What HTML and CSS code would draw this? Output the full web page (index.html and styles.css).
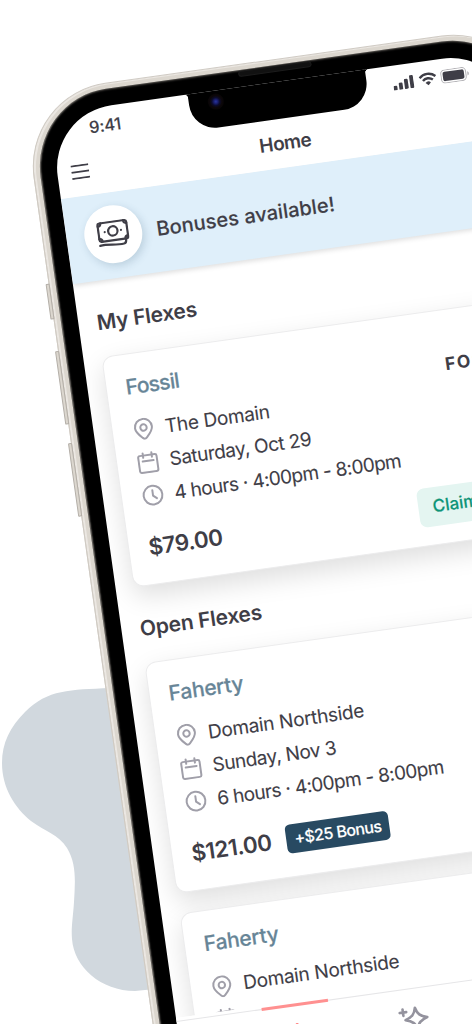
FILE: index.html
```html
<!DOCTYPE html>
<html lang="en">
<head>
    <meta charset="UTF-8">
    <meta name="viewport" content="width=device-width, initial-scale=1.0">
    <title>Home</title>
    <link rel="stylesheet" href="styles.css">
</head>
<body>

    <!-- icons used more than once -->
    <svg class="sprite" aria-hidden="true">
        <symbol id="icon-pin" viewBox="0 0 22 22">
            <path d="M11 21c-.7 0-1.300-.4-2-1.100C5.500 16.500 2.500 13.700 2.500 9.500a8.500 8.500 0 0 1 17 0c0 4.200-3 7-6.500 10.400-.7.7-1.300 1.100-2 1.100z"/>
            <circle cx="11" cy="9.700" r="3.200"/>
        </symbol>
        <symbol id="icon-calendar" viewBox="0 0 22 22">
            <rect x="1.500" y="3.500" width="18.500" height="17" rx="1.800"/>
            <path d="M6.500 1.200v4.500M15.300 1.200v4.500M5.500 9.300h11"/>
        </symbol>
        <symbol id="icon-clock" viewBox="0 0 22 22">
            <circle cx="11" cy="11" r="9.400"/>
            <path d="M11 6v5.500l3.500 3"/>
        </symbol>
    </svg>

    <svg class="blob" viewBox="0 0 160 310">
        <path d="M110 2C70 4 48 3 25 26C10 41 2 57 2 77C2 102 15 122 31 135C46 146 58 148 67 162C77 178 75 198 74 216C73 232 71 242 72 253C74 281 101 305 135 305L155 303V2z"/>
    </svg>

    <div class="phone">
        <span class="side-btn mute"></span>
        <span class="side-btn vol-up"></span>
        <span class="side-btn vol-down"></span>
        <span class="speaker"></span>

        <div class="screen">
            <div class="notch"><span class="camera"></span></div>

            <div class="status">
                <span class="time">9:41</span>
                <div class="status-icons">
                    <svg width="21" height="14" viewBox="0 0 21 14">
                        <rect x="0" y="9.500" width="3.800" height="4.500" rx="1"/>
                        <rect x="5.600" y="7" width="3.800" height="7" rx="1"/>
                        <rect x="11.200" y="4" width="3.800" height="10" rx="1"/>
                        <rect x="16.800" y="1" width="3.800" height="13" rx="1"/>
                    </svg>
                    <svg class="wifi" width="18" height="14" viewBox="0 0 18 14">
                        <path d="M1 5.200a11.500 11.500 0 0 1 16 0M4 8.400a7.200 7.200 0 0 1 10 0"/>
                        <path class="dot" d="M9 13.500L6.300 10.800a3.900 3.900 0 0 1 5.400 0z"/>
                    </svg>
                    <svg class="battery" width="29" height="14" viewBox="0 0 29 14">
                        <rect class="shell" x=".5" y=".5" width="25" height="13" rx="3.800"/>
                        <rect x="2.300" y="2.300" width="21.400" height="9.400" rx="2"/>
                        <path class="cap" d="M27 5v4.200c1-.4 1.500-1.200 1.500-2.100S28 5.400 27 5z"/>
                    </svg>
                </div>
            </div>

            <div class="header">
                <svg class="menu" width="18" height="15" viewBox="0 0 18 15">
                    <path d="M0 1.200h18M0 7.500h18M0 13.800h18"/>
                </svg>
                <h1>Home</h1>
            </div>

            <div class="content">
                <div class="banner">
                    <div class="banner-icon">
                        <svg width="32" height="28" viewBox="0 0 32 28">
                            <rect x="1.500" y="1.500" width="29" height="18.500" rx="2"/>
                            <circle cx="16" cy="10.700" r="4.700"/>
                            <path d="M1.500 4.500a3 3 0 0 0 3-3M30.500 4.500a3 3 0 0 1-3-3M1.500 17a3 3 0 0 1 3 3M30.500 17a3 3 0 0 0-3 3"/>
                            <path d="M1.500 23.800c8-1 16 2 24 1 2 0 2.500-1.500 2.500-4"/>
                            <circle class="dot" cx="7.800" cy="10.800" r="1.100"/>
                            <circle class="dot" cx="24.200" cy="10.800" r="1.100"/>
                        </svg>
                    </div>
                    <span class="banner-text">Bonuses available!</span>
                </div>

                <h2>My Flexes</h2>
                <div class="card">
                    <div class="card-head">
                        <h3 class="fossil">Fossil</h3>
                        <span class="brand">FOSSIL</span>
                    </div>
                    <ul>
                        <li><svg><use href="#icon-pin"/></svg><span class="place">The Domain</span></li>
                        <li><svg><use href="#icon-calendar"/></svg><span class="date">Saturday, Oct 29</span></li>
                        <li><svg><use href="#icon-clock"/></svg><span class="hours">4 hours · 4:00pm - 8:00pm</span></li>
                    </ul>
                    <div class="card-foot">
                        <span class="price">$79.00</span>
                        <button class="claim">Claim</button>
                    </div>
                </div>

                <h2 class="open">Open Flexes</h2>
                <div class="card">
                    <div class="card-head">
                        <h3>Faherty</h3>
                    </div>
                    <ul>
                        <li><svg><use href="#icon-pin"/></svg><span class="place">Domain Northside</span></li>
                        <li><svg><use href="#icon-calendar"/></svg><span class="date">Sunday, Nov 3</span></li>
                        <li><svg><use href="#icon-clock"/></svg><span class="hours">6 hours · 4:00pm - 8:00pm</span></li>
                    </ul>
                    <div class="card-foot">
                        <span class="price">$121.00</span>
                        <span class="bonus">+$25 Bonus</span>
                    </div>
                </div>

                <div class="card">
                    <div class="card-head">
                        <h3>Faherty</h3>
                    </div>
                    <ul>
                        <li><svg><use href="#icon-pin"/></svg><span class="place">Domain Northside</span></li>
                        <li><svg><use href="#icon-calendar"/></svg></li>
                    </ul>
                </div>
            </div>

            <div class="tabs">
                <div class="tab active">
                    <svg width="24" height="24" viewBox="0 0 24 24">
                        <path d="M2 10.500L12 2l10 8.500V22H2z"/>
                    </svg>
                </div>
                <div class="tab">
                    <svg width="32" height="28" viewBox="0 0 32 28">
                        <path d="M18 3c1.500 6.500 4 9 11 11-7 2-9.500 4.500-11 11-1.500-6.500-4-9-11-11C14 12 16.500 9.500 18 3z"/>
                        <path d="M5.500 3v6.500M2.200 6.200h6.600"/>
                    </svg>
                </div>
            </div>
        </div>
    </div>

</body>
</html>
```
FILE: styles.css
```css
* {
    box-sizing: border-box;
}

html {
    overflow: hidden;
}

body {
    position: relative;
    width: 472px;
    height: 1024px;
    margin: 0;
    overflow: hidden;
    background: #fff;
    color: #3f3e47;
    font-family: Inter, "Liberation Sans", sans-serif;
}

h1, h2, h3, ul {
    margin: 0;
    padding: 0;
}

.sprite {
    position: absolute;
    width: 0;
    height: 0;
}

.blob {
    position: absolute;
    left: 0;
    top: 686px;
    width: 160px;
    height: 310px;
    fill: #d1d8de;
}

/* phone body, tilted around the corner of its screen */
.phone {
    position: absolute;
    left: 25px;
    top: 91.600px;
    width: 507px;
    height: 1040px;
    padding: 17px 16.500px;
    border: 5.500px solid #dcd7cf;
    border-left-width: 7px;
    border-radius: 84px;
    background: #000;
    box-shadow: inset 0 0 2px 1px #55524e, inset 1px 0 1px #8d8983;
    transform: rotate(-8deg);
    transform-origin: 23.500px 22.500px;
}

.phone::before {
    content: "";
    position: absolute;
    inset: -6px -6px -6px -7px;
    border: 1px solid #cfcac3;
    border-radius: 84px;
    box-shadow: inset 2px 1px 0 #ebe7e2;
}

.side-btn {
    position: absolute;
    left: -10px;
    width: 4px;
    border: 1px solid #b4afa8;
    border-radius: 1px;
    background: #dcd7cf;
}

.mute {
    top: 185px;
    height: 36px;
}

.vol-up {
    top: 253px;
    height: 74px;
}

.vol-down {
    top: 346px;
    height: 74px;
}

.speaker {
    position: absolute;
    left: 210px;
    top: 1px;
    width: 74px;
    height: 6px;
    border-radius: 3px;
    background: #111;
    border: 1px solid #1c1c1c;
}

.screen {
    position: relative;
    display: flex;
    flex-direction: column;
    width: 460px;
    height: 995px;
    border-radius: 63px;
    overflow: hidden;
    background: #fff;
}

.notch {
    position: absolute;
    left: 140px;
    top: -1px;
    width: 179px;
    height: 38px;
    border-radius: 0 0 26px 26px;
    background: #000;
}

.notch::before,
.notch::after {
    content: "";
    position: absolute;
    top: 0;
    left: -4px;
    width: 5px;
    height: 5px;
    background: radial-gradient(circle at 0 100%, transparent 4px, #000 4.500px);
}

.notch::after {
    left: 178px;
    transform: scaleX(-1);
}

.camera {
    position: absolute;
    left: 19px;
    top: 4px;
    width: 16px;
    height: 16px;
    border-radius: 50%;
    background: radial-gradient(circle, #2a36a0 0, #1a1f70 2px, #0b0b2c 4px, #0c0709 6px, #080506 8px);
}

.status {
    display: flex;
    justify-content: space-between;
    align-items: center;
    height: 37px;
    padding: 0 37.500px 0 38.500px;
}

.time {
    margin-top: 1px;
    font-size: 16.500px;
    font-weight: 500;
    letter-spacing: -.2px;
    -webkit-text-stroke: .15px;
}

.status-icons {
    display: flex;
    align-items: center;
    gap: 4.300px;
    margin-top: -1.500px;
    fill: #3f3e47;
}

.wifi path {
    fill: none;
    stroke: #3f3e47;
    stroke-width: 2.400;
}

.wifi .dot {
    fill: #3f3e47;
    stroke: none;
}

.battery .shell {
    fill: none;
    stroke: #b2b1b5;
}

.battery .cap {
    fill: #b2b1b5;
}

.header {
    display: grid;
    grid-template-columns: 18px 1fr 18px;
    align-items: center;
    height: 48.500px;
    padding: 0 13.500px 0 14.500px;
}

.menu {
    stroke: #3f3e47;
    stroke-width: 1.800;
}

h1 {
    font-size: 19px;
    font-weight: 600;
    letter-spacing: -.5px;
    text-align: center;
}

.content {
    height: 827.500px;
    overflow: hidden;
}

.banner {
    display: flex;
    align-items: center;
    gap: 15px;
    height: 86px;
    padding-left: 18px;
    background: #dfeffa;
    box-shadow: 0 2px 5px rgba(0, 0, 0, .13);
}

.banner-icon {
    display: flex;
    align-items: center;
    justify-content: center;
    width: 58px;
    height: 58px;
    margin-top: -1px;
    border-radius: 50%;
    background: #fff;
    box-shadow: 2px 3px 8px rgba(40, 80, 110, .2);
}

.banner-icon svg {
    fill: none;
    stroke: #3f3e47;
    stroke-width: 2.200;
    stroke-linecap: round;
}

.banner-icon .dot {
    fill: #3f3e47;
    stroke: none;
}

.banner-text {
    font-size: 20px;
    font-weight: 500;
    letter-spacing: .08px;
    -webkit-text-stroke: .15px;
}

h2 {
    height: 76px;
    padding: 28px 0 0 19px;
    font-size: 21px;
    font-weight: 600;
    letter-spacing: -.2px;
    line-height: 28px;
}

.card {
    height: 233px;
    margin: 0 18px 20.500px 18.500px;
    padding: 19px 19px 0;
    border: 1px solid #ececed;
    border-radius: 11px;
    background: #fff;
    box-shadow: 0 10px 26px rgba(0, 0, 0, .13);
}

.card-head {
    display: flex;
    justify-content: space-between;
    align-items: flex-start;
    height: 28px;
}

h3 {
    color: #678597;
    font-size: 21px;
    font-weight: 500;
    letter-spacing: -.25px;
    line-height: 28px;
    -webkit-text-stroke: .2px;
}

.fossil {
    letter-spacing: -.65px;
}

.brand {
    width: 64px;
    margin-bottom: -42px;
    font-size: 17.500px;
    font-weight: 700;
    letter-spacing: 1.700px;
    line-height: 70px;
}

ul {
    margin-top: 13.300px;
    list-style: none;
}

li {
    display: flex;
    align-items: center;
    gap: 10.500px;
    height: 33.400px;
    padding-left: 1px;
    font-size: 19px;
    white-space: nowrap;
    -webkit-text-stroke: .1px;
}

li svg {
    width: 22px;
    height: 22px;
    fill: none;
    stroke: #a09fa9;
    stroke-width: 2;
    stroke-linecap: round;
}

.place {
    letter-spacing: -.26px;
}

.date {
    letter-spacing: -.45px;
}

.hours {
    letter-spacing: -.6px;
}

.card-foot {
    display: flex;
    align-items: center;
    height: 40px;
    margin-top: 13.500px;
}

.price {
    padding-left: .5px;
    font-size: 22.500px;
    font-weight: 600;
    letter-spacing: -.5px;
}

.claim {
    width: 111px;
    height: 38.500px;
    margin-left: auto;
    padding: 0 0 0 15px;
    border: 0;
    border-radius: 7px;
    background: #e4f5f1;
    color: #0e9478;
    font: 500 17px Inter, sans-serif;
    text-align: left;
    -webkit-text-stroke: .15px;
}

.bonus {
    height: 28.500px;
    margin-left: 15.500px;
    padding: 0 8px;
    border-radius: 5px;
    background: #284a62;
    color: #fff;
    font-size: 16px;
    font-weight: 500;
    letter-spacing: -.55px;
    line-height: 28.500px;
    -webkit-text-stroke: .15px;
}

.open {
    margin-top: -20.500px;
}

.tabs {
    position: relative;
    display: flex;
    height: 82px;
    padding: 0 60.500px;
    background: #fff;
}

.tabs::before {
    content: "";
    position: absolute;
    left: 0;
    top: 2.500px;
    width: 100%;
    height: 1px;
    background: #e6e6e8;
}

.tab {
    position: relative;
    display: flex;
    justify-content: center;
    width: 117px;
    padding-top: 20px;
    fill: none;
    stroke: #94939e;
    stroke-width: 2.600;
    stroke-linejoin: round;
    stroke-linecap: round;
}

.active {
    padding-top: 20.500px;
    stroke: #ff6b6b;
}

.active::before {
    content: "";
    position: absolute;
    left: 25.500px;
    top: 2px;
    width: 67px;
    height: 2.500px;
    background: #ff9090;
}
```
